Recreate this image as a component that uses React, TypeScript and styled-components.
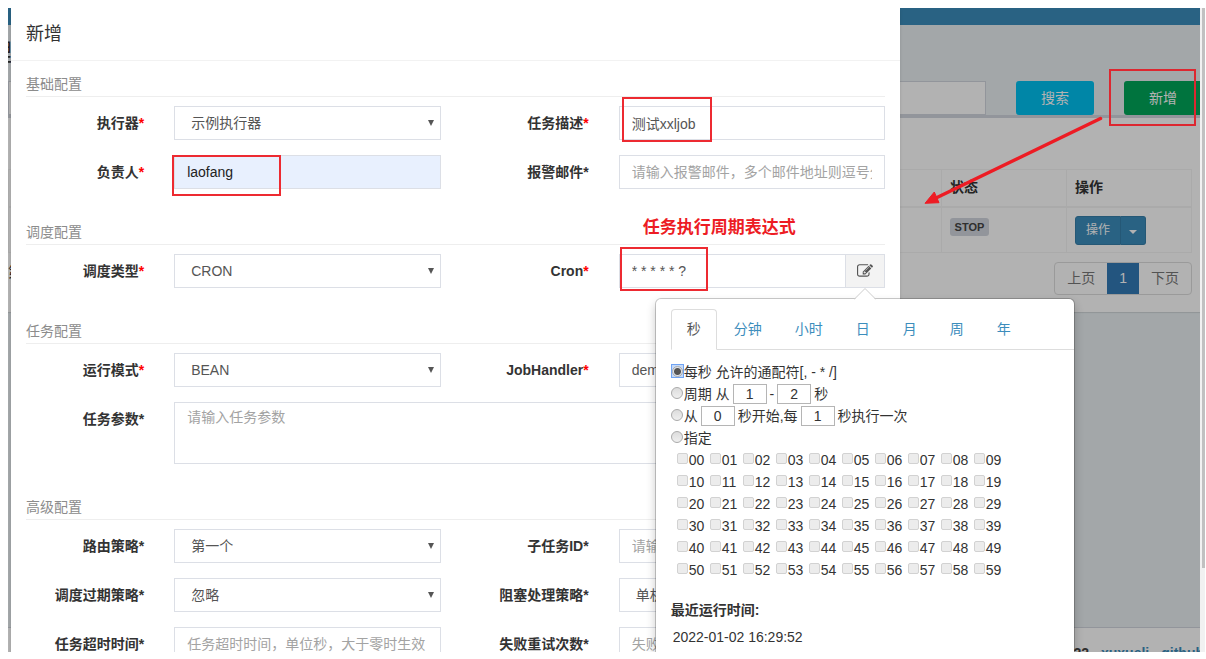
import React from "react";
import styled, { createGlobalStyle, css } from "styled-components";

const GlobalStyle = createGlobalStyle`
  *, *::before, *::after { box-sizing: border-box; }
  body {
    margin: 0;
    background: #fff;
    color: #333;
    font: 14px/20px "Liberation Sans", "Noto Sans CJK SC", sans-serif;
  }
  button, input, select, textarea { font: inherit; color: inherit; margin: 0; }
  h1, h2, h3, p { margin: 0; font-weight: 400; }
`;

/* ---------- window frame ---------- */

const Frame = styled.div`
  display: flex;
  height: 100vh;
  padding: 8px 1px 7px 8px;
`;

const Viewport = styled.div`
  position: relative;
  flex: 1;
  min-width: 0;
  overflow: hidden;
`;

const ScrollTrack = styled.div`
  width: 5px;
  padding-left: 2px;
  background: #f1f1f1;
`;

const ScrollThumb = styled.div`
  height: 87%;
  background: #c1c1c1;
`;

/* ---------- page behind the dialog ---------- */

const Page = styled.div`
  display: flex;
  flex-direction: column;
  height: 100%;
  background: #eaf0f3;
`;

const Navbar = styled.header`
  height: 17px;
  background: #3c8dbc;
`;

const PageHead = styled.div`
  height: 56px;
  padding-top: 15px;
`;

const PageTitle = styled.h1`
  font-size: 24px;
  line-height: 26px;
  text-indent: -92px;
  white-space: nowrap;
`;

const FilterRow = styled.div`
  display: grid;
  grid-template-columns: 1fr 78px 78px;
  column-gap: 30px;
  height: 34px;
  margin-right: -2px;
`;

const FilterInput = styled.input`
  border: 1px solid #d2d6de;
  background: #fff;
`;

const FilterButton = styled.button<{ $color: string }>`
  border: 0;
  border-radius: 3px;
  background: ${(p) => p.$color};
  color: #fff;
`;

const Box = styled.section`
  height: 197px;
  padding: 51px 8px 0 0;
  border-top: 3px solid #d2d6de;
  background: #fff;
  box-shadow: 0 1px 1px rgba(0, 0, 0, 0.1);
`;

const JobTable = styled.table`
  width: 100%;
  border: 1px solid #f4f4f4;
  border-collapse: collapse;
  table-layout: fixed;

  th, td {
    height: 46px;
    padding: 0 8px;
    border: 1px solid #f4f4f4;
    text-align: left;
  }
  th {
    height: 37px;
    padding-bottom: 2px;
    border-bottom-width: 2px;
  }
  td { padding-bottom: 5px; }
  th:nth-child(n + 2) { width: 125px; }
`;

const StatusTag = styled.span`
  display: block;
  width: 39px;
  border-radius: 3px;
  background: #d2d6de;
  color: #444;
  font-size: 11px;
  font-weight: 700;
  line-height: 18px;
  text-align: center;
`;

const ActionGroup = styled.div`
  display: flex;
  padding-top: 6px;
`;

const ActionButton = styled.button<{ $side: "left" | "right" }>`
  height: 29px;
  padding: 0 10px;
  border: 1px solid #367fa9;
  border-radius: ${(p) => (p.$side === "left" ? "3px 0 0 3px" : "0 3px 3px 0")};
  ${(p) => p.$side === "right" && css`border-left: 0; padding: 0 8px;`}
  background: #3c8dbc;
  color: #fff;
  font-size: 12px;
  line-height: 18px;
`;

const Pagination = styled.div`
  display: flex;
  justify-content: space-between;
  padding-top: 9px;
`;

const Pager = styled.nav`
  display: flex;
  overflow: hidden;
  border: 1px solid #ddd;
  border-radius: 4px;
`;

const PageLink = styled.a<{ $active?: boolean }>`
  padding: 5px 12px;
  color: ${(p) => (p.$active ? "#fff" : "#777")};
  background: ${(p) => (p.$active ? "#337ab7" : "transparent")};
  line-height: 21px;
  text-decoration: none;
`;

const Footer = styled.footer`
  display: flex;
  justify-content: flex-end;
  gap: 12px;
  height: 25px;
  margin: auto -4px 0 0;
  padding-top: 15px;
  overflow: hidden;
  border-top: 1px solid #d2d6de;
  background: #fff;
  color: #444;
  font-weight: 700;
  white-space: nowrap;

  a { color: #3c8dbc; text-decoration: none; }
`;

const Backdrop = styled.div`
  position: absolute;
  inset: 0;
  background: rgba(0, 0, 0, 0.3);
`;

/* ---------- dialog ---------- */

const Dialog = styled.form`
  position: absolute;
  top: 0;
  left: 3px;
  right: 300px;
  background: #fff;
  box-shadow: 0 2px 3px rgba(0, 0, 0, 0.125);
`;

const DialogTitle = styled.h2`
  padding: 13px 15px;
  border-bottom: 1px solid #f2f2f2;
  font-size: 18px;
  line-height: 26px;
`;

const SectionTitle = styled.h3<{ $first?: boolean }>`
  margin: 0 15px 9px;
  padding-top: ${(p) => (p.$first ? 13 : 33)}px;
  padding-bottom: 2px;
  border-bottom: 1px solid #eee;
  color: #8c8c8c;
  font-size: 14px;
`;

const Row = styled.div`
  display: grid;
  grid-template-columns: 2fr 4fr 2fr 4fr;
  & + & { margin-top: 15px; }
`;

const Label = styled.label<{ $required?: boolean }>`
  padding: 7px 15px 0;
  font-weight: 700;
  text-align: right;
  white-space: nowrap;

  &::after {
    content: "*";
    color: ${(p) => (p.$required ? "red" : "inherit")};
  }
`;

const Cell = styled.div<{ $wide?: boolean }>`
  position: relative;
  display: flex;
  margin: 0 15px;
  ${(p) => p.$wide && css`grid-column: span 3;`}
`;

const control = css`
  flex: 1;
  min-width: 0;
  height: 34px;
  padding: 6px 12px;
  border: 1px solid #dcdfe6;
  border-radius: 0;
  background: #fff;
  color: #555;
  outline: 0;
  &::placeholder { color: #a3a3a3; opacity: 1; }
`;

const TextInput = styled.input<{ $autofill?: boolean }>`
  ${control}
  ${(p) => p.$autofill && css`background: #e8f0fe; color: #222;`}
`;

const TextArea = styled.textarea`
  ${control}
  display: block;
  height: 62px;
  padding-top: 4px;
  resize: none;
`;

const Select = styled.select`
  ${control}
  appearance: none;
  padding-left: 16px;
`;

const SelectArrow = styled.svg`
  position: absolute;
  right: 7px;
  top: 14px;
  width: 6px;
  height: 6px;
  pointer-events: none;
`;

const Addon = styled.button`
  display: grid;
  place-items: center;
  width: 40px;
  height: 34px;
  margin-left: -1px;
  padding: 0;
  border: 1px solid #dcdfe6;
  background: #f3f3f3;
  color: #555;
`;

/* ---------- cron popover ---------- */

const Popover = styled.div`
  position: absolute;
  z-index: 2;
  top: 44px;
  left: 36px;
  width: 420px;
  padding: 10px 0 90px 15px;
  border: 1px solid rgba(0, 0, 0, 0.2);
  border-radius: 6px;
  background: #fff;
  background-clip: padding-box;
  box-shadow: 0 5px 10px rgba(0, 0, 0, 0.2);
`;

const PopoverArrow = styled.svg`
  position: absolute;
  top: -11px;
  left: 198px;
  width: 22px;
  height: 12px;
`;

const Tabs = styled.div`
  display: flex;
  gap: 1px;
  border-bottom: 1px solid #ddd;
`;

const Tab = styled.button<{ $active?: boolean }>`
  height: 41px;
  margin-bottom: -1px;
  padding: 0 15px 2px;
  border: 1px solid ${(p) => (p.$active ? "#ddd" : "transparent")};
  border-bottom-color: ${(p) => (p.$active ? "#fff" : "transparent")};
  border-radius: 4px 4px 0 0;
  background: ${(p) => (p.$active ? "#fff" : "transparent")};
  color: ${(p) => (p.$active ? "#555" : "#3c8dbc")};
`;

const Options = styled.div`
  padding-top: 11px;
`;

const Line = styled.div`
  display: flex;
  align-items: center;
  height: 22px;
  white-space: pre;
`;

const Radio = styled.input`
  appearance: none;
  width: 12px;
  height: 12px;
  margin: 0 1px 2px 0;
  border: 1px solid #aaa;
  border-radius: 50%;
  background: linear-gradient(#dcdcdc, #efefef);

  &:checked { background: radial-gradient(#555 0 3px, #dfe3ea 4px); }
`;

const RadioFocus = styled.span`
  display: grid;
  place-items: center;
  width: 13px;
  height: 14px;
  margin-bottom: 2px;
  border: 1px solid #6fa3f3;
  background: #c5daf9;

  ${Radio} { margin: 0; width: 11px; height: 11px; }
`;

const NumberBox = styled.input`
  width: 34px;
  height: 20px;
  margin: 0 3px;
  padding: 0;
  border: 1px solid #b5b5b5;
  background: #fff;
  text-align: center;
`;

const SecondGrid = styled.div`
  display: grid;
  grid-template-columns: repeat(10, 33px);
  padding-left: 6px;
`;

const Second = styled.label`
  display: flex;
  align-items: center;
  height: 22px;
`;

const Check = styled.input`
  appearance: none;
  width: 11px;
  height: 11px;
  margin: 0 1px 3px 0;
  border: 1px solid #d2d2d2;
  border-radius: 2px;
  background: #ececec;
`;

const RunTitle = styled.p`
  padding-top: 19px;
  font-weight: 700;
`;

const RunTime = styled.p`
  padding: 7px 0 0 2px;
`;

/* ---------- red markers ---------- */

const Marker = styled.span<{ $x: number; $y: number; $w: number; $h: number }>`
  position: absolute;
  z-index: 1;
  left: ${(p) => p.$x}px;
  top: ${(p) => p.$y}px;
  width: ${(p) => p.$w}px;
  height: ${(p) => p.$h}px;
  border: 2px solid #ed2a31;
  pointer-events: none;
`;

const AddMarker = styled.span`
  position: absolute;
  top: 61px;
  right: 4px;
  width: 87px;
  height: 57px;
  border: 2px solid #dd2730;
`;

const Note = styled.strong`
  position: absolute;
  top: -38px;
  left: 24px;
  color: #ed1c24;
  font-size: 17px;
  line-height: 24px;
  white-space: nowrap;
`;

const Pointer = styled.svg`
  position: absolute;
  top: 106px;
  right: 96px;
  width: 182px;
  height: 92px;
`;

type FieldProps = { id: string; label: string; required?: boolean; children: React.ReactNode; wide?: boolean };

const Field = ({ id, label, required, children, wide }: FieldProps) => (
  <>
    <Label htmlFor={id} $required={required}>{label}</Label>
    <Cell $wide={wide}>{children}</Cell>
  </>
);

const Dropdown = ({ id, value }: { id: string; value: string }) => (
  <>
    <Select id={id} defaultValue={value}>
      <option>{value}</option>
    </Select>
    <SelectArrow viewBox="0 0 6 6" aria-hidden="true">
      <path d="M0 0h6L3 6z" fill="#555" />
    </SelectArrow>
  </>
);

const EditIcon = () => (
  <svg width="16" height="16" viewBox="0 0 1792 1792" fill="currentColor" aria-hidden="true">
    <path d="M888 1184l116-116-152-152-116 116v56h96v96h56zm440-720q-16-16-33 1l-350 350q-17 17-1 33t33-1l350-350q17-17 1-33zm80 594v190q0 119-84.5 203.5t-203.5 84.5h-832q-119 0-203.5-84.5t-84.5-203.5v-832q0-119 84.5-203.5t203.5-84.5h832q63 0 117 25 15 7 18 23 3 17-9 29l-49 49q-14 14-32 8-23-6-45-6h-832q-66 0-113 47t-47 113v832q0 66 47 113t113 47h832q66 0 113-47t47-113v-126q0-13 9-22l64-64q15-15 35-7t20 29zm-96-738l288 288-672 672h-288v-288zm444 132l-92 92-288-288 92-92q28-28 68-28t68 28l152 152q28 28 28 68t-28 68z" />
  </svg>
);

const TABS = ["秒", "分钟", "小时", "日", "月", "周", "年"];
const SECONDS = Array.from({ length: 60 }, (_, i) => String(i).padStart(2, "0"));

const CronPopover = () => (
  <Popover>
    <PopoverArrow viewBox="0 0 22 12" aria-hidden="true">
      <path d="M0 12L11 1l11 11z" fill="#fff" />
      <path d="M0 11.5L11 .5l11 11" fill="none" stroke="#ccc" />
    </PopoverArrow>
    <Tabs role="tablist">
      {TABS.map((t, i) => (
        <Tab key={t} type="button" role="tab" aria-selected={i === 0} $active={i === 0}>{t}</Tab>
      ))}
    </Tabs>
    <Options>
      <Line>
        <RadioFocus><Radio type="radio" name="mode" id="every" defaultChecked /></RadioFocus>
        <label htmlFor="every">每秒 允许的通配符[, - * /]</label>
      </Line>
      <Line>
        <Radio type="radio" name="mode" id="range" />
        <label htmlFor="range">周期 从</label>
        <NumberBox aria-label="周期开始" defaultValue="1" />-
        <NumberBox aria-label="周期结束" defaultValue="2" />秒
      </Line>
      <Line>
        <Radio type="radio" name="mode" id="step" />
        <label htmlFor="step">从</label>
        <NumberBox aria-label="开始秒" defaultValue="0" />秒开始,每
        <NumberBox aria-label="间隔秒" defaultValue="1" />秒执行一次
      </Line>
      <Line>
        <Radio type="radio" name="mode" id="fixed" />
        <label htmlFor="fixed">指定</label>
      </Line>
      <SecondGrid>
        {SECONDS.map((s) => (
          <Second key={s}><Check type="checkbox" />{s}</Second>
        ))}
      </SecondGrid>
    </Options>
    <RunTitle>最近运行时间:</RunTitle>
    <RunTime>2022-01-02 16:29:52</RunTime>
  </Popover>
);

export default function App() {
  return (
    <>
      <GlobalStyle />
      <Frame>
        <Viewport>
          <Page>
            <Navbar />
            <PageHead><PageTitle>任务管理</PageTitle></PageHead>
            <FilterRow>
              <FilterInput aria-label="负责人" />
              <FilterButton $color="#00c0ef">搜索</FilterButton>
              <FilterButton $color="#00a65a">新增</FilterButton>
            </FilterRow>
            <Box>
              <JobTable>
                <thead>
                  <tr><th /><th>状态</th><th>操作</th></tr>
                </thead>
                <tbody>
                  <tr>
                    <td />
                    <td><StatusTag>STOP</StatusTag></td>
                    <td>
                      <ActionGroup>
                        <ActionButton $side="left">操作</ActionButton>
                        <ActionButton $side="right" aria-label="更多操作">
                          <svg width="8" height="4" viewBox="0 0 8 4"><path d="M0 0h8L4 4z" fill="#fff" /></svg>
                        </ActionButton>
                      </ActionGroup>
                    </td>
                  </tr>
                </tbody>
              </JobTable>
              <Pagination>
                <span>第</span>
                <Pager>
                  <PageLink href="#prev">上页</PageLink>
                  <PageLink href="#1" $active>1</PageLink>
                  <PageLink href="#next">下页</PageLink>
                </Pager>
              </Pagination>
            </Box>
            <Footer>
              <span>22</span>
              <a href="#xuxueli">xuxueli</a>
              <a href="#github">github</a>
            </Footer>
          </Page>
          <Backdrop />

          <Dialog>
            <DialogTitle>新增</DialogTitle>

            <SectionTitle $first>基础配置</SectionTitle>
            <Row>
              <Field id="group" label="执行器" required><Dropdown id="group" value="示例执行器" /></Field>
              <Field id="desc" label="任务描述" required>
                <TextInput id="desc" defaultValue="测试xxljob" />
                <Marker $x={3} $y={-9} $w={90} $h={45} />
              </Field>
            </Row>
            <Row>
              <Field id="author" label="负责人" required>
                <TextInput id="author" defaultValue="laofang" $autofill />
                <Marker $x={-2} $y={0} $w={109} $h={41} />
              </Field>
              <Field id="mail" label="报警邮件">
                <TextInput id="mail" placeholder="请输入报警邮件，多个邮件地址则逗号分隔" />
              </Field>
            </Row>

            <SectionTitle>调度配置</SectionTitle>
            <Row>
              <Field id="type" label="调度类型" required><Dropdown id="type" value="CRON" /></Field>
              <Field id="cron" label="Cron" required>
                <TextInput id="cron" defaultValue="* * * * * ?" />
                <Addon type="button" aria-label="编辑 Cron"><EditIcon /></Addon>
                <Note>任务执行周期表达式</Note>
                <Marker $x={1} $y={-7} $w={88} $h={44} />
                <CronPopover />
              </Field>
            </Row>

            <SectionTitle>任务配置</SectionTitle>
            <Row>
              <Field id="mode" label="运行模式" required><Dropdown id="mode" value="BEAN" /></Field>
              <Field id="handler" label="JobHandler" required>
                <TextInput id="handler" defaultValue="demoJobHandler" />
              </Field>
            </Row>
            <Row>
              <Field id="param" label="任务参数" wide>
                <TextArea id="param" placeholder="请输入任务参数" />
              </Field>
            </Row>

            <SectionTitle>高级配置</SectionTitle>
            <Row>
              <Field id="route" label="路由策略"><Dropdown id="route" value="第一个" /></Field>
              <Field id="child" label="子任务ID">
                <TextInput id="child" placeholder="请输入子任务的任务ID" />
              </Field>
            </Row>
            <Row>
              <Field id="misfire" label="调度过期策略"><Dropdown id="misfire" value="忽略" /></Field>
              <Field id="block" label="阻塞处理策略"><Dropdown id="block" value="单机串行" /></Field>
            </Row>
            <Row>
              <Field id="timeout" label="任务超时时间">
                <TextInput id="timeout" placeholder="任务超时时间，单位秒，大于零时生效" />
              </Field>
              <Field id="retry" label="失败重试次数">
                <TextInput id="retry" placeholder="失败重试次数，大于零时生效" />
              </Field>
            </Row>
          </Dialog>

          <AddMarker />
          <Pointer viewBox="0 0 182 92" aria-hidden="true">
            <path d="M178.5 4.5L14 84" stroke="#ed1c24" strokeWidth="3.5" strokeLinecap="round" />
            <path d="M3 89.3L12.3 78 17 88.7z" fill="#ed1c24" stroke="#ed1c24" />
          </Pointer>
        </Viewport>
        <ScrollTrack><ScrollThumb /></ScrollTrack>
      </Frame>
    </>
  );
}
